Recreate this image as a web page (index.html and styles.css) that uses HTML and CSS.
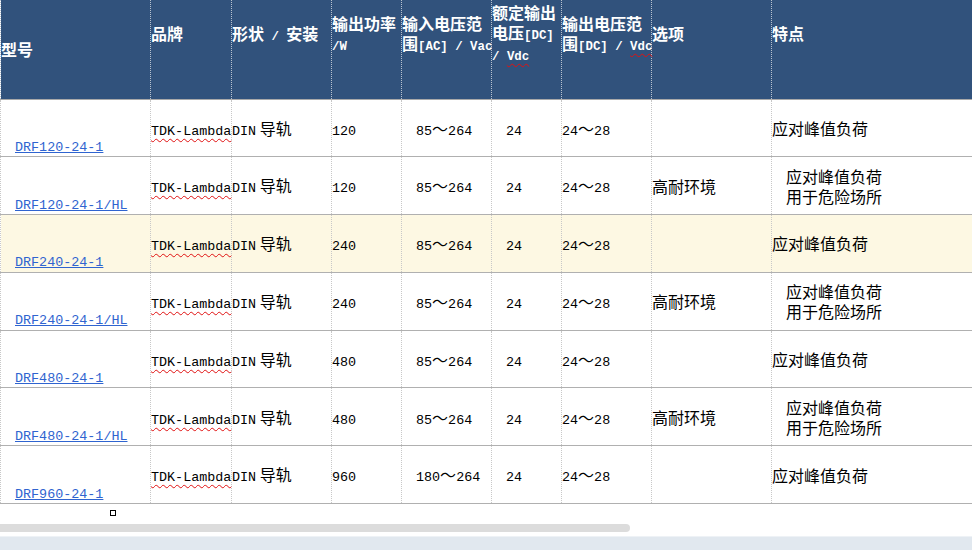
FILE: index.html
```html
<!DOCTYPE html>
<html lang="zh">
<head>
<meta charset="utf-8">
<title>DRF 系列</title>
<link rel="stylesheet" href="styles.css">
</head>
<body>
<div class="page">
<table class="spec">
  <colgroup>
    <col class="c1"><col class="c2"><col class="c3"><col class="c4"><col class="c5"><col class="c6"><col class="c7"><col class="c8"><col class="c9">
  </colgroup>
  <thead>
    <tr>
      <th class="first">型号</th>
      <th>品牌</th>
      <th>形状<span class="hm"> / </span>安装</th>
      <th>输出功率<br><span class="hm">/W</span></th>
      <th>输入电压范<br>围<span class="hm">[AC] / Vac</span></th>
      <th>额定输出<br>电压<span class="hm">[DC]</span><br><span class="hm">/ <span class="spell">Vdc</span></span></th>
      <th>输出电压范<br>围<span class="hm">[DC] / <span class="spell">Vdc</span></span></th>
      <th>选项</th>
      <th>特点</th>
    </tr>
  </thead>
  <tbody>
    <tr>
      <td class="model"><a href="#" class="m">DRF120-24-1</a></td>
      <td><span class="m spell">TDK-Lambda</span></td>
      <td><span class="m">DIN</span> 导轨</td>
      <td><span class="m">120</span></td>
      <td class="ind"><span class="m">85</span>～<span class="m">264</span></td>
      <td class="ind"><span class="m">24</span></td>
      <td><span class="m">24</span>～<span class="m">28</span></td>
      <td></td>
      <td>应对峰值负荷</td>
    </tr>
    <tr>
      <td class="model"><a href="#" class="m">DRF120-24-1/HL</a></td>
      <td><span class="m spell">TDK-Lambda</span></td>
      <td><span class="m">DIN</span> 导轨</td>
      <td><span class="m">120</span></td>
      <td class="ind"><span class="m">85</span>～<span class="m">264</span></td>
      <td class="ind"><span class="m">24</span></td>
      <td><span class="m">24</span>～<span class="m">28</span></td>
      <td>高耐环境</td>
      <td class="ind">应对峰值负荷<br>用于危险场所</td>
    </tr>
    <tr class="hl">
      <td class="model"><a href="#" class="m">DRF240-24-1</a></td>
      <td><span class="m spell">TDK-Lambda</span></td>
      <td><span class="m">DIN</span> 导轨</td>
      <td><span class="m">240</span></td>
      <td class="ind"><span class="m">85</span>～<span class="m">264</span></td>
      <td class="ind"><span class="m">24</span></td>
      <td><span class="m">24</span>～<span class="m">28</span></td>
      <td></td>
      <td>应对峰值负荷</td>
    </tr>
    <tr>
      <td class="model"><a href="#" class="m">DRF240-24-1/HL</a></td>
      <td><span class="m spell">TDK-Lambda</span></td>
      <td><span class="m">DIN</span> 导轨</td>
      <td><span class="m">240</span></td>
      <td class="ind"><span class="m">85</span>～<span class="m">264</span></td>
      <td class="ind"><span class="m">24</span></td>
      <td><span class="m">24</span>～<span class="m">28</span></td>
      <td>高耐环境</td>
      <td class="ind">应对峰值负荷<br>用于危险场所</td>
    </tr>
    <tr>
      <td class="model"><a href="#" class="m">DRF480-24-1</a></td>
      <td><span class="m spell">TDK-Lambda</span></td>
      <td><span class="m">DIN</span> 导轨</td>
      <td><span class="m">480</span></td>
      <td class="ind"><span class="m">85</span>～<span class="m">264</span></td>
      <td class="ind"><span class="m">24</span></td>
      <td><span class="m">24</span>～<span class="m">28</span></td>
      <td></td>
      <td>应对峰值负荷</td>
    </tr>
    <tr>
      <td class="model"><a href="#" class="m">DRF480-24-1/HL</a></td>
      <td><span class="m spell">TDK-Lambda</span></td>
      <td><span class="m">DIN</span> 导轨</td>
      <td><span class="m">480</span></td>
      <td class="ind"><span class="m">85</span>～<span class="m">264</span></td>
      <td class="ind"><span class="m">24</span></td>
      <td><span class="m">24</span>～<span class="m">28</span></td>
      <td>高耐环境</td>
      <td class="ind">应对峰值负荷<br>用于危险场所</td>
    </tr>
    <tr>
      <td class="model"><a href="#" class="m">DRF960-24-1</a></td>
      <td><span class="m spell">TDK-Lambda</span></td>
      <td><span class="m">DIN</span> 导轨</td>
      <td><span class="m">960</span></td>
      <td class="ind"><span class="m">180</span>～<span class="m">264</span></td>
      <td class="ind"><span class="m">24</span></td>
      <td><span class="m">24</span>～<span class="m">28</span></td>
      <td></td>
      <td>应对峰值负荷</td>
    </tr>
  </tbody>
</table>
<div class="handle"></div>
<div class="hscroll"><div class="thumb"></div></div>
<div class="status"></div>
</div>
</body>
</html>
```
FILE: styles.css
```css
html, body {
  margin: 0;
  padding: 0;
  background: #ffffff;
}
body {
  font-family: "Noto Sans CJK SC", "Liberation Sans", sans-serif;
  font-size: 16px;
  color: #000;
  width: 972px;
  height: 550px;
  overflow: hidden;
}
.page {
  display: flex;
  flex-direction: column;
}
.spec {
  border-collapse: collapse;
  table-layout: fixed;
  width: 972px;
}
.c1 { width: 150px; }
.c2 { width: 81px; }
.c3 { width: 100px; }
.c4 { width: 70px; }
.c5 { width: 90px; }
.c6 { width: 70px; }
.c7 { width: 90px; }
.c8 { width: 120px; }
.c9 { width: 201px; }

.spec thead tr {
  height: 99px;
}
.spec th {
  background: #31527c;
  color: #ffffff;
  font-weight: 700;
  text-align: left;
  vertical-align: middle;
  padding: 0 0 33px 0;
  line-height: 20px;
  white-space: nowrap;
  border-left: 1px dotted #b9c3d0;
  border-right: 1px dotted #b9c3d0;
  border-bottom: 1px solid #a9a9a9;
}
.spec th.first {
  padding: 0;
}
.spec th .hm {
  font-family: "Liberation Mono", monospace;
  font-size: 12.4px;
  font-weight: 700;
  line-height: 1;
}
.spec tbody tr {
  height: 57.8px;
}
.spec td {
  padding: 0;
  vertical-align: middle;
  line-height: 20px;
  border-left: 1px dotted #c8c8c8;
  border-right: 1px dotted #c8c8c8;
  border-bottom: 1px solid #b0b0b0;
  white-space: nowrap;
}
.spec td.model {
  vertical-align: bottom;
  padding: 0 0 2px 14px;
}
.spec td.ind {
  padding-left: 14px;
}
.spec tr.hl td {
  background: #fdf8e3;
}
.m {
  font-family: "Liberation Mono", monospace;
  font-size: 13.4px;
  line-height: 1;
}
a.m {
  color: #2f64d0;
  text-decoration: underline;
}
.spell {
  text-decoration: underline wavy #e01010;
  text-decoration-thickness: 1px;
  text-underline-offset: 3px;
}
.handle {
  width: 4px;
  height: 4px;
  border: 1px solid #000;
  margin: 6px 0 0 110px;
}
.hscroll {
  height: 8px;
  margin-top: 8px;
}
.thumb {
  width: 630px;
  height: 8px;
  background: #dcdcdc;
  border-radius: 0 4px 4px 0;
}
.status {
  margin-top: 4px;
  height: 14px;
  background: #e1e8ef;
  border-top: 1px solid #eef2f6;
}
```
